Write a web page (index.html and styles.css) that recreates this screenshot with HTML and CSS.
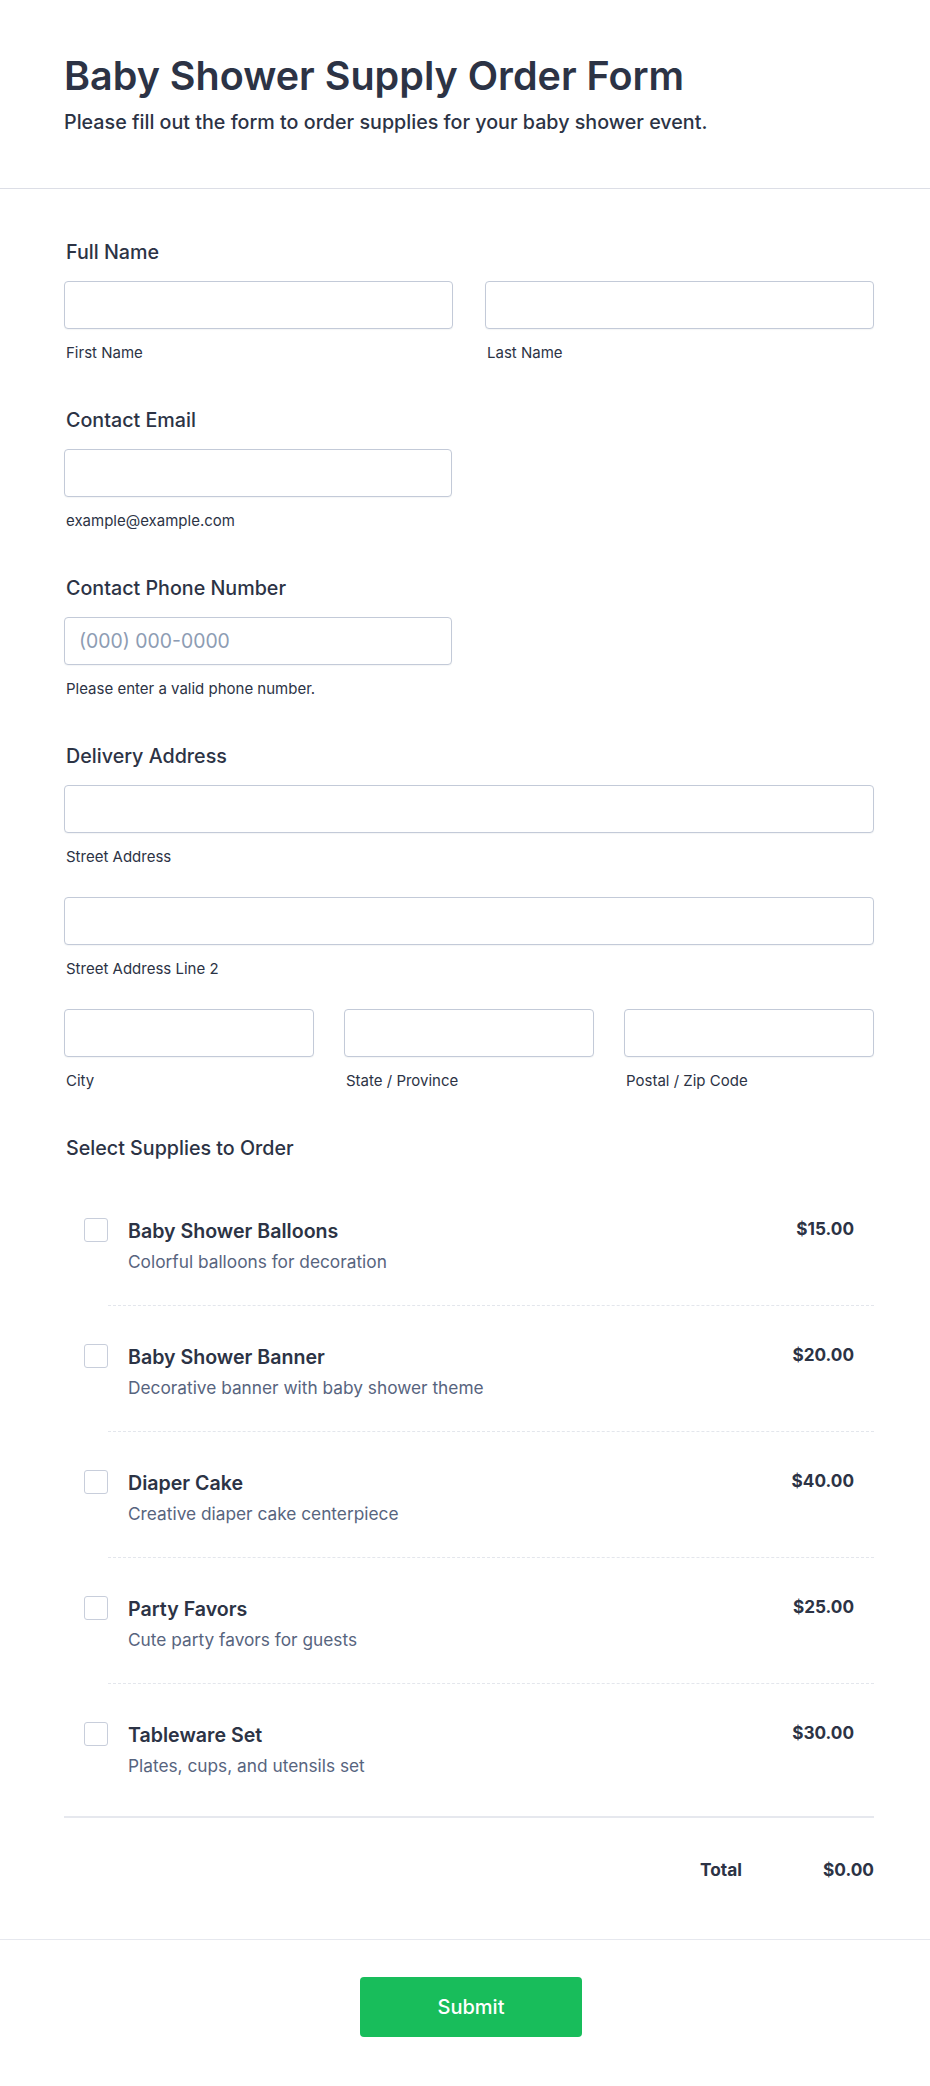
FILE: index.html
```html
<!DOCTYPE html>
<html lang="en">
<head>
<meta charset="utf-8">
<title>Baby Shower Supply Order Form</title>
<link rel="stylesheet" href="styles.css">
</head>
<body>
<header class="head">
  <h1 class="title">Baby Shower Supply Order Form</h1>
  <p class="subtitle">Please fill out the form to order supplies for your baby shower event.</p>
</header>
<main class="form">
  <section class="field">
    <div class="label">Full Name</div>
    <div class="cols cols-2">
      <div class="col"><input class="input" type="text"><div class="sublabel">First Name</div></div>
      <div class="col"><input class="input" type="text"><div class="sublabel">Last Name</div></div>
    </div>
  </section>
  <section class="field">
    <div class="label">Contact Email</div>
    <input class="input input-half" type="email">
    <div class="sublabel">example@example.com</div>
  </section>
  <section class="field">
    <div class="label">Contact Phone Number</div>
    <input class="input input-half" type="tel" placeholder="(000) 000-0000">
    <div class="sublabel">Please enter a valid phone number.</div>
  </section>
  <section class="field">
    <div class="label">Delivery Address</div>
    <div class="addr-row">
      <input class="input" type="text">
      <div class="sublabel">Street Address</div>
    </div>
    <div class="addr-row">
      <input class="input" type="text">
      <div class="sublabel">Street Address Line 2</div>
    </div>
    <div class="cols cols-3">
      <div class="col"><input class="input" type="text"><div class="sublabel">City</div></div>
      <div class="col"><input class="input" type="text"><div class="sublabel">State / Province</div></div>
      <div class="col"><input class="input" type="text"><div class="sublabel">Postal / Zip Code</div></div>
    </div>
  </section>
  <section class="field supplies">
    <div class="label">Select Supplies to Order</div>
    <div class="items">
      <div class="item">
        <input class="check" type="checkbox">
        <div class="item-body">
          <div class="item-name">Baby Shower Balloons</div>
          <div class="item-desc">Colorful balloons for decoration</div>
        </div>
        <div class="item-price">$15.00</div>
      </div>
      <div class="sep"></div>
      <div class="item">
        <input class="check" type="checkbox">
        <div class="item-body">
          <div class="item-name">Baby Shower Banner</div>
          <div class="item-desc">Decorative banner with baby shower theme</div>
        </div>
        <div class="item-price">$20.00</div>
      </div>
      <div class="sep"></div>
      <div class="item">
        <input class="check" type="checkbox">
        <div class="item-body">
          <div class="item-name">Diaper Cake</div>
          <div class="item-desc">Creative diaper cake centerpiece</div>
        </div>
        <div class="item-price">$40.00</div>
      </div>
      <div class="sep"></div>
      <div class="item">
        <input class="check" type="checkbox">
        <div class="item-body">
          <div class="item-name">Party Favors</div>
          <div class="item-desc">Cute party favors for guests</div>
        </div>
        <div class="item-price">$25.00</div>
      </div>
      <div class="sep"></div>
      <div class="item">
        <input class="check" type="checkbox">
        <div class="item-body">
          <div class="item-name">Tableware Set</div>
          <div class="item-desc">Plates, cups, and utensils set</div>
        </div>
        <div class="item-price">$30.00</div>
      </div>
    </div>
    <div class="total-row">
      <span class="total-label">Total</span>
      <span class="total-value">$0.00</span>
    </div>
  </section>
</main>
<footer class="foot">
  <button class="submit" type="button">Submit</button>
</footer>
</body>
</html>
```

FILE: styles.css
```css
* {
  box-sizing: border-box;
}

html, body {
  margin: 0;
  padding: 0;
  background: #ffffff;
}

body {
  font-family: Inter, "Noto Sans", "Liberation Sans", sans-serif;
  color: #2c3345;
  width: 930px;
}

.head {
  padding: 54px 56px 53px 64px;
  border-bottom: 1px solid #dcdee6;
}

.title {
  margin: 0;
  font-size: 39.5px;
  line-height: 44px;
  font-weight: 600;
  color: #2c3345;
}

.subtitle {
  margin: 11px 0 0;
  font-size: 19.7px;
  line-height: 26px;
  font-weight: 500;
  color: #2c3345;
}

.form {
  padding: 49px 56px 57px 64px;
}

.field {
  margin-bottom: 43px;
}

.field.supplies {
  margin-bottom: 0;
}

.label {
  padding-left: 2px;
  font-size: 19.7px;
  line-height: 28px;
  font-weight: 500;
  color: #2c3345;
  margin-bottom: 15px;
}

.input {
  display: block;
  width: 100%;
  height: 48px;
  margin: 0;
  padding: 0 14px;
  border: 1px solid #c3cad8;
  border-radius: 4px;
  background: #ffffff;
  font-family: Inter, "Noto Sans", "Liberation Sans", sans-serif;
  font-size: 19.4px;
  color: #2c3345;
  box-shadow: 0 1px 1px rgba(44, 51, 69, 0.05);
}

.input::placeholder {
  color: #8d9cb3;
}

.input-half {
  width: 388px;
}

.sublabel {
  margin-top: 14px;
  padding-left: 2px;
  font-size: 15px;
  line-height: 20px;
  font-weight: 400;
  color: #2c3345;
}

.cols {
  display: grid;
}

.cols-2 {
  grid-template-columns: 1fr 1fr;
  column-gap: 32px;
}

.cols-3 {
  grid-template-columns: 1fr 1fr 1fr;
  column-gap: 30px;
}

.addr-row {
  margin-bottom: 30px;
}

.items {
  padding-top: 3px;
  border-bottom: 2px solid #e6e8ee;
}

.item {
  display: flex;
  align-items: flex-start;
  padding: 38px 20px 31px 20px;
}

.items .item:last-child {
  padding-bottom: 38px;
}

.check {
  appearance: none;
  -webkit-appearance: none;
  flex: 0 0 24px;
  width: 24px;
  height: 24px;
  margin: 0 20px 0 0;
  border: 1px solid #c8cedb;
  border-radius: 3px;
  background: #ffffff;
}

.item-body {
  flex: 1;
}

.item-name {
  font-size: 19.6px;
  line-height: 26px;
  font-weight: 600;
  color: #2c3345;
}

.item-desc {
  margin-top: 6px;
  font-size: 17.3px;
  line-height: 24px;
  font-weight: 400;
  color: #57647e;
}

.item-price {
  font-size: 17.2px;
  line-height: 24px;
  font-weight: 700;
  color: #2c3345;
  margin-top: -1px;
}

.sep {
  margin-left: 44px;
  border-top: 1px dashed #e3e6ec;
}

.total-row {
  display: flex;
  justify-content: flex-end;
  align-items: baseline;
  gap: 81px;
  margin-top: 40px;
  line-height: 24px;
}

.total-label {
  font-size: 17.3px;
  font-weight: 700;
  color: #2c3345;
}

.total-value {
  font-size: 17.3px;
  font-weight: 700;
  color: #2c3345;
}

.foot {
  display: flex;
  justify-content: center;
  padding: 37px 56px 49px 68px;
  border-top: 1px solid #e6e8ee;
}

.submit {
  width: 222px;
  height: 60px;
  border: none;
  border-radius: 4px;
  background: #18bd5b;
  color: #ffffff;
  font-family: Inter, "Noto Sans", "Liberation Sans", sans-serif;
  font-size: 20px;
  font-weight: 500;
}
```
